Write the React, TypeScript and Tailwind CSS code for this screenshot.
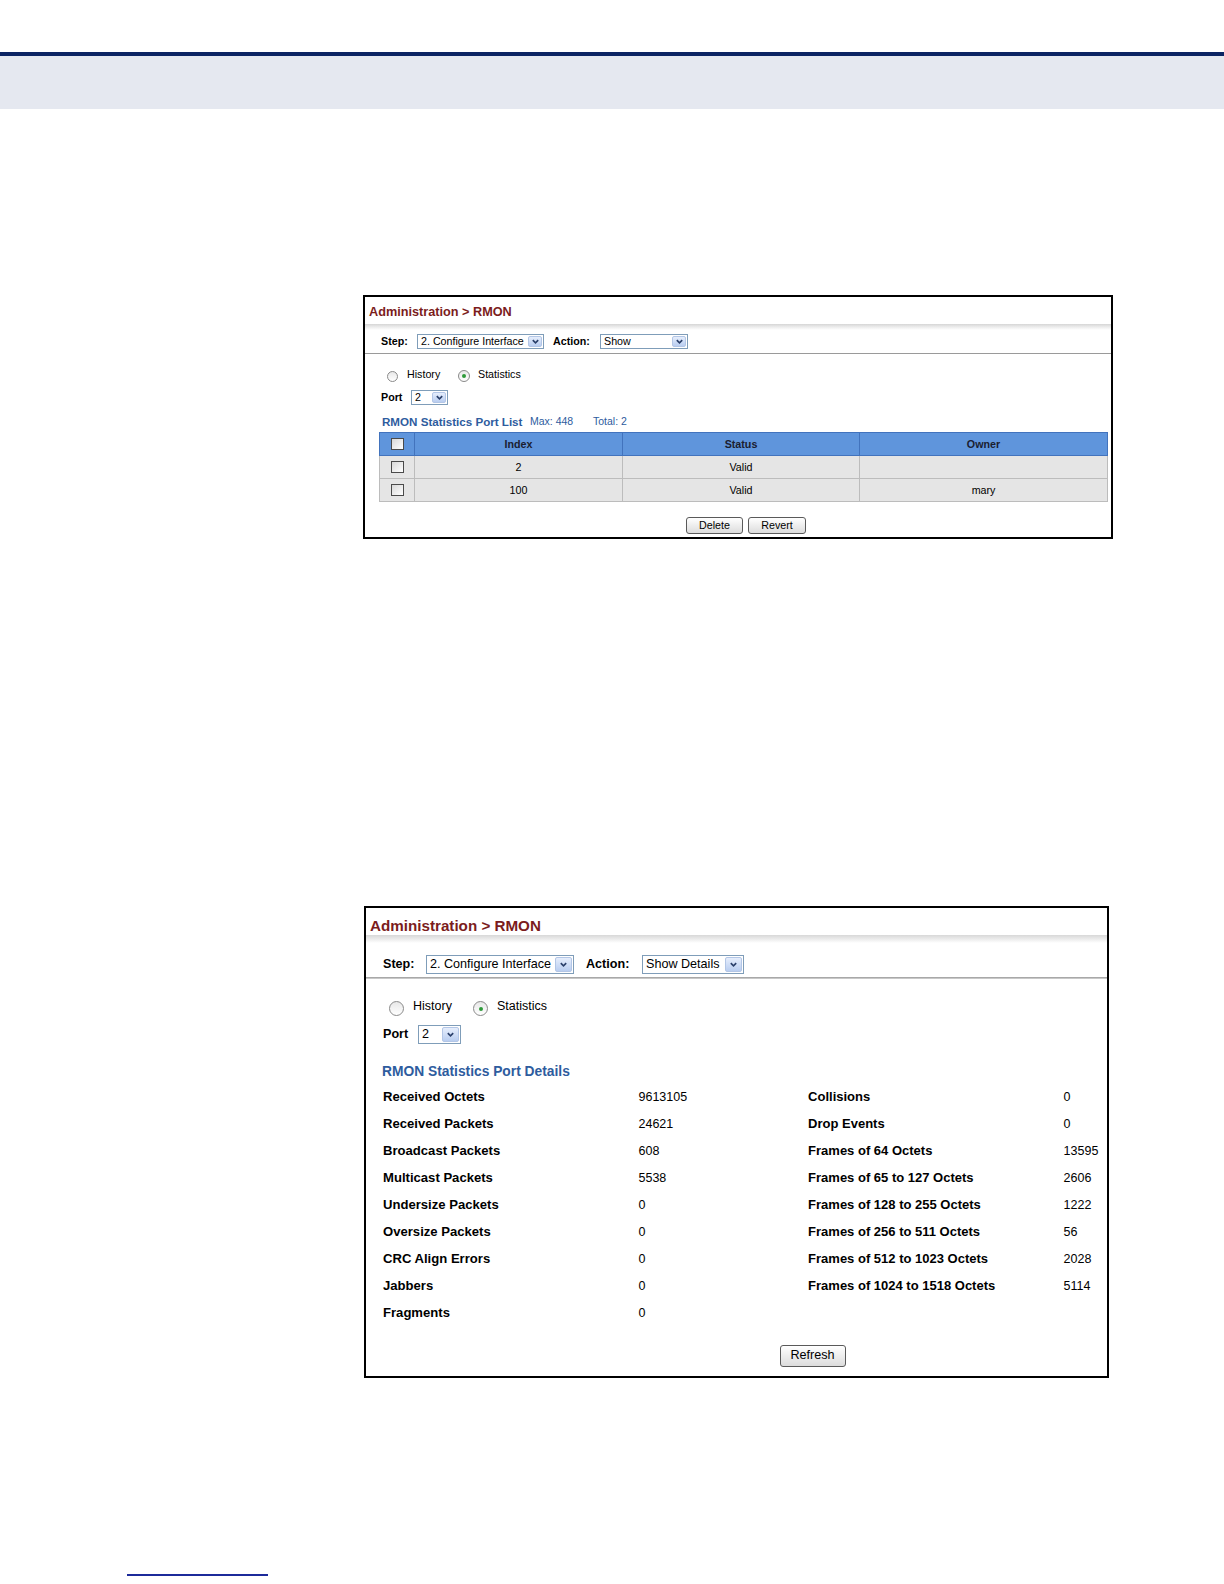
import React from "react";

const font = { fontFamily: '"Liberation Sans", Arial, sans-serif' };

function Chevron({ size }: { size: number }) {
  return (
    <svg width={size} height={size} viewBox="0 0 10 10">
      <path d="M2 3.5 L5 6.5 L8 3.5" fill="none" stroke="#2a3f6a" strokeWidth="1.8" />
    </svg>
  );
}

function Select({
  value,
  w,
  h,
  text,
  btn,
}: {
  value: string;
  w: string;
  h: string;
  text: string;
  btn: string;
}) {
  return (
    <div className={`flex items-stretch border border-[#7f9db9] bg-white ${w} ${h}`}>
      <span className={`flex-1 flex items-center pl-[3px] text-black whitespace-nowrap overflow-hidden ${text}`}>
        {value}
      </span>
      <span className={`m-[1px] flex items-center justify-center rounded-[2px] border border-[#b3c6e6] bg-gradient-to-b from-[#e6eefc] to-[#b9cdf0] ${btn}`}>
        <Chevron size={9} />
      </span>
    </div>
  );
}

function Radio({ on, size }: { on?: boolean; size: string }) {
  return (
    <span
      className={`flex shrink-0 items-center justify-center rounded-full border border-[#8a8a8a] bg-gradient-to-b from-[#e8e8e8] to-white ${size}`}
    >
      {on && <span className="block h-[4px] w-[4px] rounded-full bg-[#2f9a3a]" />}
    </span>
  );
}

function Check() {
  return (
    <span className="block h-[12px] w-[13px] border border-[#4a4a4a] bg-gradient-to-br from-[#d8d8d8] to-white" />
  );
}

function Btn({ label, cls }: { label: string; cls: string }) {
  return (
    <button
      className={`flex items-center justify-center rounded-[3px] border border-[#5a5a5a] bg-gradient-to-b from-white to-[#dcdcdc] text-black ${cls}`}
    >
      {label}
    </button>
  );
}

function ListPanel() {
  const rows = [
    { idx: "2", status: "Valid", owner: "" },
    { idx: "100", status: "Valid", owner: "mary" },
  ];
  return (
    <div className="ml-[363px] h-[244px] w-[750px] border-2 border-black" style={font}>
      <div className="h-[27px] pl-[4px] pt-[7px] text-[12.7px] font-bold leading-[16px] text-[#7b1c1c]">
        Administration &gt; RMON
      </div>
      <div className="h-[6px] bg-gradient-to-b from-[#d6d6d6] via-[#ececec] to-white" />
      <div className="flex h-[23px] items-center pl-[16px] text-[10.7px]">
        <span className="w-[36px] font-bold">Step:</span>
        <Select value="2. Configure Interface" w="w-[127px]" h="h-[15px]" text="text-[10.7px]" btn="w-[14px]" />
        <span className="ml-[9px] w-[47px] font-bold">Action:</span>
        <Select value="Show" w="w-[88px]" h="h-[15px]" text="text-[10.7px]" btn="w-[14px]" />
      </div>
      <div className="h-[1px] bg-[#9a9a9a]" />
      <div className="flex h-[32px] items-end pb-[4px] pl-[22px] text-[10.7px]">
        <Radio size="h-[11px] w-[11px]" />
        <span className="ml-[9px] w-[51px]">History</span>
        <Radio on size="h-[12px] w-[12px]" />
        <span className="ml-[8px]">Statistics</span>
      </div>
      <div className="flex h-[23px] items-center pl-[16px] text-[10.7px]">
        <span className="w-[30px] font-bold">Port</span>
        <Select value="2" w="w-[37px]" h="h-[15px]" text="text-[10.7px]" btn="w-[14px]" />
      </div>
      <div className="flex h-[23px] items-center pl-[17px] pt-[3px] text-[#2e5c9e]">
        <span className="w-[148px] whitespace-nowrap text-[11.6px] font-bold">RMON Statistics Port List</span>
        <span className="w-[63px] text-[10.5px]">Max: 448</span>
        <span className="text-[10.5px]">Total: 2</span>
      </div>
      <table className="ml-[14px] w-[729px] border-collapse text-[10.7px]">
        <thead>
          <tr className="h-[23px] bg-[#5f95dc] text-[#1a2030]">
            <th className="w-[35px] border border-[#4273bd]">
              <span className="flex justify-center">
                <Check />
              </span>
            </th>
            <th className="w-[208px] border border-[#4273bd] font-bold">Index</th>
            <th className="w-[237px] border border-[#4273bd] font-bold">Status</th>
            <th className="border border-[#4273bd] font-bold">Owner</th>
          </tr>
        </thead>
        <tbody>
          {rows.map((r) => (
            <tr key={r.idx} className="h-[23px] bg-[#e5e5e5] text-center">
              <td className="border border-[#bcbcbc]">
                <span className="flex justify-center">
                  <Check />
                </span>
              </td>
              <td className="border border-[#bcbcbc]">{r.idx}</td>
              <td className="border border-[#bcbcbc]">{r.status}</td>
              <td className="border border-[#bcbcbc]">{r.owner}</td>
            </tr>
          ))}
        </tbody>
      </table>
      <div className="mt-[15px] flex justify-center gap-[5px] pl-[16px] text-[10.7px]">
        <Btn label="Delete" cls="h-[17px] w-[57px]" />
        <Btn label="Revert" cls="h-[17px] w-[58px]" />
      </div>
    </div>
  );
}

const stats: [string, string, string, string][] = [
  ["Received Octets", "9613105", "Collisions", "0"],
  ["Received Packets", "24621", "Drop Events", "0"],
  ["Broadcast Packets", "608", "Frames of 64 Octets", "13595"],
  ["Multicast Packets", "5538", "Frames of 65 to 127 Octets", "2606"],
  ["Undersize Packets", "0", "Frames of 128 to 255 Octets", "1222"],
  ["Oversize Packets", "0", "Frames of 256 to 511 Octets", "56"],
  ["CRC Align Errors", "0", "Frames of 512 to 1023 Octets", "2028"],
  ["Jabbers", "0", "Frames of 1024 to 1518 Octets", "5114"],
  ["Fragments", "0", "", ""],
];

function DetailPanel() {
  return (
    <div className="ml-[364px] h-[472px] w-[745px] border-2 border-black" style={font}>
      <div className="h-[27px] pl-[4px] pt-[9px] text-[15.2px] font-bold leading-[18px] text-[#7b1c1c]">
        Administration &gt; RMON
      </div>
      <div className="h-[8px] bg-gradient-to-b from-[#d8d8d8] via-[#ebebeb] to-white" />
      <div className="flex h-[34px] items-center pl-[17px] pt-[9px] text-[12.6px]">
        <span className="w-[43px] font-bold">Step:</span>
        <Select value="2. Configure Interface" w="w-[148px]" h="h-[19px]" text="text-[12.6px]" btn="w-[17px]" />
        <span className="ml-[12px] w-[56px] font-bold">Action:</span>
        <Select value="Show Details" w="w-[102px]" h="h-[19px]" text="text-[12.6px]" btn="w-[17px]" />
      </div>
      <div className="h-[2px] bg-gradient-to-b from-[#999] to-[#d8d8d8]" />
      <div className="flex h-[37px] items-end pl-[23px] text-[12.5px]">
        <Radio size="h-[15px] w-[15px]" />
        <span className="ml-[9px] w-[60px]">History</span>
        <Radio on size="h-[15px] w-[15px]" />
        <span className="ml-[9px]">Statistics</span>
      </div>
      <div className="flex h-[36px] items-center pl-[17px] text-[12.6px]">
        <span className="w-[35px] font-bold">Port</span>
        <Select value="2" w="w-[43px]" h="h-[19px]" text="text-[12.6px]" btn="w-[17px]" />
      </div>
      <div className="flex h-[31.5px] items-center pl-[16px] pt-[9px] text-[13.8px] font-bold text-[#2e5c9e]">
        RMON Statistics Port Details
      </div>
      <div className="grid grid-cols-[255.5px_169.6px_255.5px_1fr] pl-[17px]">
        {stats.map((s) => (
          <React.Fragment key={s[0]}>
            <div className="flex h-[27px] items-center text-[13.1px] font-bold">{s[0]}</div>
            <div className="flex h-[27px] items-center text-[12.5px]">{s[1]}</div>
            <div className="flex h-[27px] items-center text-[13px] font-bold">{s[2]}</div>
            <div className="flex h-[27px] items-center text-[12.5px]">{s[3]}</div>
          </React.Fragment>
        ))}
      </div>
      <div className="mt-[18px] flex justify-center pl-[152px] text-[12.6px]">
        <Btn label="Refresh" cls="h-[22.5px] w-[66px]" />
      </div>
    </div>
  );
}

export default function App() {
  return (
    <div className="relative h-[1584px] w-full bg-white text-black" style={font}>
      <div className="h-[52px]" />
      <div className="h-[4px] bg-[#0b2463]" />
      <div className="h-[53px] bg-[#e5e8f0]" />
      <div className="h-[186px]" />
      <ListPanel />
      <div className="h-[367px]" />
      <DetailPanel />
      <div className="ml-[127px] mt-[196px] h-[2px] w-[141px] bg-[#1c2a9a]" />
    </div>
  );
}
